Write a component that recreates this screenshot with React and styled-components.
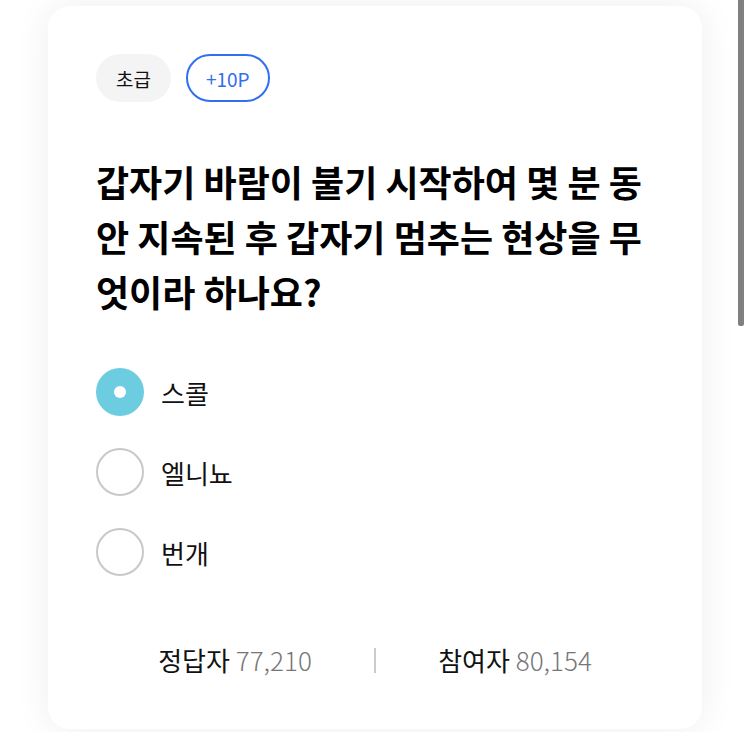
import React, { useState } from "react";
import styled, { createGlobalStyle } from "styled-components";

const Global = createGlobalStyle`
  html, body { margin: 0; padding: 0; background: #ffffff; }
  body { font-family: "Noto Sans CJK KR", "Noto Sans", sans-serif; color: #111; }
  * { box-sizing: border-box; }
`;

const Page = styled.div`
  padding: 6px 48px 3px;
`;

const Card = styled.section`
  background: #fff;
  border-radius: 22px;
  box-shadow: 0 0 36px rgba(0, 0, 0, 0.07);
  padding: 48px 48px 53px;
`;

const Badges = styled.div`
  display: flex;
  gap: 15px;
`;

const Badge = styled.span`
  display: inline-flex;
  align-items: center;
  height: 48px;
  padding: 0 18px;
  border-radius: 24px;
  font-size: 19px;
  border: 2px solid ${(p) => (p.$outline ? "#2f6ff0" : "transparent")};
  background: ${(p) => (p.$outline ? "#fff" : "#f4f4f4")};
  color: ${(p) => (p.$outline ? "#2f6ff0" : "#111")};
`;

const Question = styled.h2`
  margin: 52px 0 0;
  font-size: 36px;
  font-weight: 700;
  line-height: 55px;
  color: #000;
  word-break: break-all;
`;

const Options = styled.ul`
  list-style: none;
  margin: 49px 0 0;
  padding: 0;
  display: flex;
  flex-direction: column;
  gap: 32px;
`;

const Option = styled.li`
  display: flex;
  align-items: center;
  gap: 17px;
  height: 48px;
  font-size: 26px;
  color: #111;
  cursor: pointer;
`;

const Radio = styled.span`
  width: 48px;
  height: 48px;
  border-radius: 50%;
  flex: none;
  display: flex;
  align-items: center;
  justify-content: center;
  background: ${(p) => (p.$checked ? "#6dcde0" : "#fff")};
  border: ${(p) => (p.$checked ? "none" : "2px solid #c8c8c8")};
  &::after {
    content: "";
    display: ${(p) => (p.$checked ? "block" : "none")};
    width: 12px;
    height: 12px;
    border-radius: 50%;
    background: #fff;
  }
`;

const Stats = styled.div`
  margin-top: 68px;
  display: flex;
  align-items: center;
`;

const Stat = styled.div`
  flex: 1;
  text-align: center;
  font-size: 26px;
  line-height: 32px;
  color: #111;
`;

const Num = styled.span`
  color: #777;
  font-weight: 300;
`;

const Divider = styled.span`
  width: 2px;
  height: 25px;
  background: #cccccc;
  flex: none;
`;

const ScrollThumb = styled.div`
  position: fixed;
  top: 0;
  right: 6px;
  width: 6px;
  height: 326px;
  background: #808080;
  border-radius: 0 0 2px 2px;
`;

export default function App() {
  const [selected, setSelected] = useState(0);
  const options = ["스콜", "엘니뇨", "번개"];
  return (
    <>
      <Global />
      <Page>
        <Card>
          <Badges>
            <Badge>초급</Badge>
            <Badge $outline>+10P</Badge>
          </Badges>
          <Question>
            갑자기 바람이 불기 시작하여 몇 분 동안 지속된 후 갑자기 멈추는 현상을 무엇이라 하나요?
          </Question>
          <Options>
            {options.map((o, i) => (
              <Option key={o} onClick={() => setSelected(i)}>
                <Radio $checked={selected === i} />
                {o}
              </Option>
            ))}
          </Options>
          <Stats>
            <Stat>
              정답자 <Num>77,210</Num>
            </Stat>
            <Divider />
            <Stat>
              참여자 <Num>80,154</Num>
            </Stat>
          </Stats>
        </Card>
      </Page>
      <ScrollThumb />
    </>
  );
}
